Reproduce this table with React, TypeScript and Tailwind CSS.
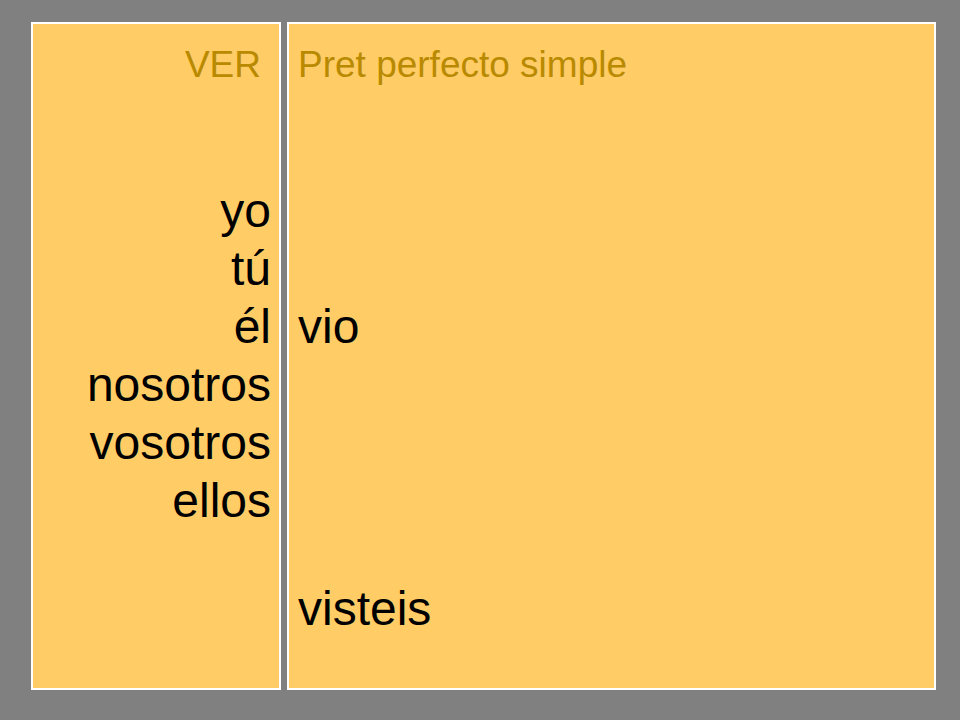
const people = ["yo", "tú", "él", "nosotros", "vosotros", "ellos"];

export default function App() {
  return (
    <div className="flex h-[720px] w-[960px] gap-[6px] bg-[#808080] pl-[31px] pt-[22px] font-['Liberation_Sans',Arial,sans-serif]">
      {/* verb + subjects */}
      <div className="flex h-[668px] w-[250px] flex-col items-end border-2 border-white bg-[#ffcc66] pr-[8px] pt-[19px]">
        <div className="mr-[10px] text-[37px] leading-[43px] text-[#b98a00]">VER</div>
        <div className="mt-[96px] flex flex-col items-end text-[48px] leading-[58px] text-black">
          {people.map((p) => (
            <div key={p}>{p}</div>
          ))}
        </div>
      </div>

      {/* tense column */}
      <div className="flex h-[668px] w-[649px] flex-col border-2 border-white bg-[#ffcc66] pl-[9px] pt-[19px]">
        <div className="text-[37px] leading-[43px] text-[#b98a00]">Pret perfecto simple</div>
        <div className="mt-[212px] text-[48px] leading-[58px] text-black">vio</div>
        <div className="mt-[224px] text-[48px] leading-[58px] text-black">visteis</div>
      </div>
    </div>
  );
}
